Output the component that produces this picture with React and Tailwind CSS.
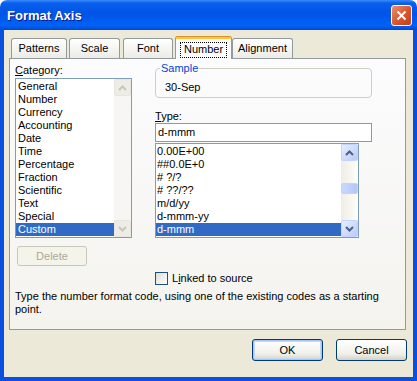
import React from "react";

const categories = [
  "General",
  "Number",
  "Currency",
  "Accounting",
  "Date",
  "Time",
  "Percentage",
  "Fraction",
  "Scientific",
  "Text",
  "Special",
  "Custom",
];

const formats = ["0.00E+00", "##0.0E+0", "# ?/?", "# ??/??", "m/d/yy", "d-mmm-yy", "d-mmm"];

const Chevron = ({ up = true, color }) => (
  <svg width="9" height="6" viewBox="0 0 9 6">
    <path
      d={up ? "M1 5 L4.5 1.5 L8 5" : "M1 1 L4.5 4.5 L8 1"}
      fill="none"
      stroke={color}
      strokeWidth="2"
    />
  </svg>
);

// enabled xp scroll arrow
const ScrollBtn = ({ up = true }) => (
  <div className="h-[17px] w-[17px] shrink-0 rounded-[2px] border border-[#C3D3FD] bg-[linear-gradient(135deg,#E6EEFF,#B9CBF6)] flex items-center justify-center">
    <Chevron up={up} color="#4D6185" />
  </div>
);

// disabled xp scroll arrow
const ScrollBtnOff = ({ up = true }) => (
  <div className="h-[17px] w-[17px] shrink-0 rounded-[2px] border border-[#E8E6DC] bg-[#EEEDE5] flex items-center justify-center">
    <Chevron up={up} color="#C9C7BA" />
  </div>
);

const Tab = ({ label, w, ml }) => (
  <div
    className={`${w} ${ml} h-[20px] border border-b-0 border-[#919B9C] rounded-t-[3px] bg-[linear-gradient(to_bottom,#FFFFFF,#ECEBE6)] flex items-center justify-center`}
  >
    {label}
  </div>
);

export default function App() {
  return (
    <div className="w-[417px] h-[381px] flex flex-col font-['Liberation_Sans',Arial,sans-serif] text-[11px] leading-[13px] text-black">
      {/* TITLE BAR */}
      <div className="h-[30px] shrink-0 rounded-t-[7px] bg-[linear-gradient(to_bottom,#3C8CF8_0%,#0A5FEE_10%,#0054E6_45%,#0062F7_85%,#0048D2_100%)] flex items-center justify-between pl-[7px] pr-[5px]">
        <span className="text-white font-bold text-[13px] [text-shadow:1px_1px_#0A1883] pt-[1px]">
          Format Axis
        </span>
        <div className="w-[21px] h-[21px] rounded-[3px] border border-white bg-[linear-gradient(135deg,#EE8D6E,#D7542C_55%,#C5401C)] flex items-center justify-center">
          <svg width="11" height="11" viewBox="0 0 11 11">
            <path d="M1.5 1.5 L9.5 9.5 M9.5 1.5 L1.5 9.5" stroke="white" strokeWidth="2" />
          </svg>
        </div>
      </div>

      {/* BODY */}
      <div className="flex-1 flex flex-col bg-[#ECE9D8] border-x-4 border-b-4 border-[#0A4FE0]">
        {/* tabs */}
        <div className="flex items-end mt-[6px] ml-[7px] relative z-10">
          <Tab label="Patterns" w="w-[56px]" ml="ml-0" />
          <Tab label="Scale" w="w-[51px]" ml="ml-[2px]" />
          <Tab label="Font" w="w-[50px]" ml="ml-[3px]" />
          <div className="ml-[2px] w-[57px] h-[23px] mb-[-1px] border-x border-[#919B9C] rounded-t-[3px] bg-[#FCFCFE] flex flex-col">
            <div className="h-[1px] bg-[#E68B2C] rounded-t-[3px]" />
            <div className="h-[2px] bg-[#FFC83C]" />
            <div className="flex-1 flex items-start justify-center pt-[3px]">
              <span className="border border-dotted border-black px-[3px] pb-[1px]">Number</span>
            </div>
          </div>
          <Tab label="Alignment" w="w-[61px]" ml="ml-0" />
        </div>

        {/* panel */}
        <div className="ml-[5px] w-[397px] h-[272px] border border-[#919B9C] bg-[linear-gradient(to_bottom,#FCFCFE,#F4F3EE)] pl-[5px] pt-[5px] flex flex-col">
          <div className="flex">
            {/* left column */}
            <div className="w-[117px] flex flex-col">
              <div>
                <span className="underline">C</span>ategory:
              </div>
              <div className="mt-[1px] h-[160px] border border-[#7F9DB9] bg-white flex">
                <div className="flex-1 pt-[1px]">
                  {categories.map((c) => (
                    <div
                      key={c}
                      className={`h-[13px] pl-[2px] ${c === "Custom" ? "bg-[#316AC5] text-white" : ""}`}
                    >
                      {c}
                    </div>
                  ))}
                </div>
                <div className="w-[17px] flex flex-col bg-[#F7F6F2]">
                  <ScrollBtnOff up />
                  <div className="flex-1" />
                  <ScrollBtnOff up={false} />
                </div>
              </div>
              <div className="mt-[8px] ml-[2px] w-[70px] h-[20px] rounded-[3px] border border-[#C9C7BA] bg-[#F5F4EA] text-[#ACA899] flex items-center justify-center">
                Delete
              </div>
            </div>

            {/* right column */}
            <div className="ml-[23px] flex flex-col">
              <div className="relative mt-[4px] w-[217px] h-[30px] rounded-[4px] border border-[#D0D0BF] pl-[9px] pt-[12px]">
                <span className="absolute left-[4px] top-[-7px] px-[1px] bg-[#FCFCFD] text-[#0046D5]">
                  Sample
                </span>
                30-Sep
              </div>
              <div className="mt-[12px]">
                <span className="underline">T</span>ype:
              </div>
              <div className="mt-0 w-[217px] h-[19px] border border-[#7F9DB9] bg-white pl-[2px] flex items-center">
                d-mmm
              </div>
              <div className="mt-[1px] w-[204px] h-[95px] border border-[#7F9DB9] bg-white flex">
                <div className="flex-1 pt-[1px]">
                  {formats.map((f) => (
                    <div
                      key={f}
                      className={`h-[13px] pl-[1px] ${f === "d-mmm" ? "bg-[#316AC5] text-white" : ""}`}
                    >
                      {f}
                    </div>
                  ))}
                </div>
                <div className="w-[17px] flex flex-col bg-[linear-gradient(to_right,#EEEDE5,#FEFEFB)]">
                  <ScrollBtn up />
                  <div className="h-[22px]" />
                  <div className="h-[11px] rounded-[2px] border border-[#C3D3FD] bg-[linear-gradient(to_right,#C9D8FC,#B4C8F6)]" />
                  <div className="flex-1" />
                  <ScrollBtn up={false} />
                </div>
              </div>
            </div>
          </div>

          {/* linked */}
          <div className="mt-[6px] ml-[140px] flex items-center gap-[4px]">
            <div className="w-[13px] h-[13px] border border-[#1C5180] bg-[linear-gradient(135deg,#DCDCD7,#FFFFFF)]" />
            <span>
              L<span className="underline">i</span>nked to source
            </span>
          </div>

          <p className="mt-[5px]">
            Type the number format code, using one of the existing codes as a starting
            <br />
            point.
          </p>
        </div>

        {/* buttons */}
        <div className="mt-[9px] flex justify-end gap-[13px] pr-[6px]">
          <div className="w-[71px] h-[22px] rounded-[3px] border border-[#003C74] bg-[linear-gradient(to_bottom,#FFFFFF,#F0F0EA_70%,#D6D0C5)] shadow-[inset_0_0_0_1px_#A9C4F2,inset_0_0_0_2px_#C6D8F8] flex items-center justify-center">
            OK
          </div>
          <div className="w-[71px] h-[22px] rounded-[3px] border border-[#003C74] bg-[linear-gradient(to_bottom,#FFFFFF,#F0F0EA_70%,#D6D0C5)] flex items-center justify-center">
            Cancel
          </div>
        </div>
      </div>
    </div>
  );
}
